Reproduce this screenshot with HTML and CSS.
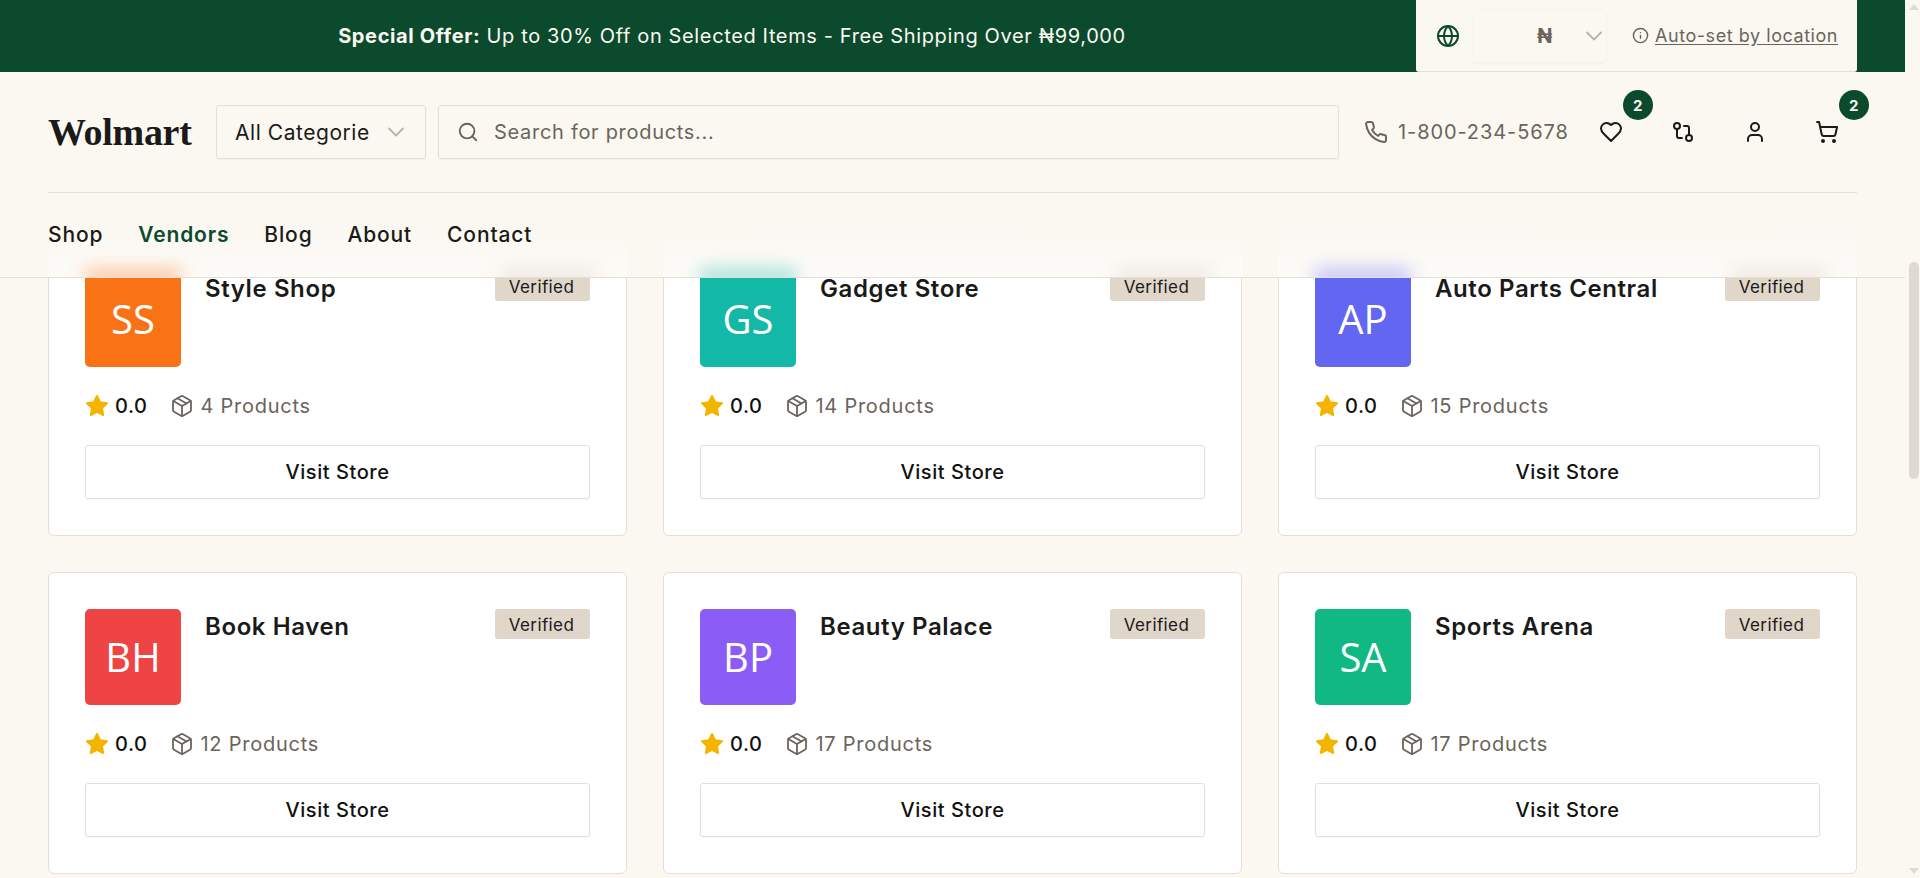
FILE: index.html
```html
<!DOCTYPE html>
<html lang="en">
<head>
<meta charset="utf-8">
<title>Wolmart Vendors</title>
<link rel="stylesheet" href="styles.css">
</head>
<body>
<svg class="sprite" aria-hidden="true">
  <symbol id="i-star" viewBox="0 0 24 24"><polygon points="12 2 15.09 8.26 22 9.27 17 14.14 18.18 21.02 12 17.77 5.82 21.02 7 14.14 2 9.27 8.91 8.26 12 2"/></symbol>
  <symbol id="i-box" viewBox="0 0 24 24"><path d="m7.5 4.27 9 5.15"/><path d="M21 8a2 2 0 0 0-1-1.73l-7-4a2 2 0 0 0-2 0l-7 4A2 2 0 0 0 3 8v8a2 2 0 0 0 1 1.73l7 4a2 2 0 0 0 2 0l7-4A2 2 0 0 0 21 16Z"/><path d="m3.3 7 8.7 5 8.7-5"/><path d="M12 22V12"/></symbol>
  <symbol id="i-chev" viewBox="0 0 24 24"><path d="m5 8.5 7 7 7-7"/></symbol>
</svg>
<div class="window">
  <div class="page">
    <div class="chrome">
      <div class="topbar">
        <p class="offer"><strong>Special Offer:</strong> Up to 30% Off on Selected Items - Free Shipping Over ₦99,000</p>
        <div class="locale">
          <svg class="ico globe" viewBox="0 0 24 24"><circle cx="12" cy="12" r="10"/><path d="M12 2a14.5 14.5 0 0 0 0 20 14.5 14.5 0 0 0 0-20"/><path d="M2 12h20"/></svg>
          <div class="currency"><span class="currency-val">₦</span><svg class="ico chev-sm"><use href="#i-chev"/></svg></div>
          <svg class="ico info" viewBox="0 0 24 24"><circle cx="12" cy="12" r="10"/><path d="M12 16v-4"/><path d="M12 8h.01"/></svg>
          <a class="auto" href="#">Auto-set by location</a>
        </div>
      </div>
      <header class="header">
        <div class="glow" aria-hidden="true">
          <div class="glow-card"><span class="halo orange"></span><span class="halo tan"></span></div>
          <div class="glow-card"><span class="halo teal"></span><span class="halo tan"></span></div>
          <div class="glow-card"><span class="halo indigo"></span><span class="halo tan"></span></div>
        </div>
        <div class="mainrow">
          <div class="logo">Wolmart</div>
          <div class="catselect"><span>All Categorie</span><svg class="ico chev-sm"><use href="#i-chev"/></svg></div>
          <label class="search">
            <svg class="ico search-ico" viewBox="0 0 24 24"><circle cx="11" cy="11" r="8"/><path d="m21 21-4.3-4.3"/></svg>
            <input class="search-input" type="text" placeholder="Search for products...">
          </label>
          <div class="phone">
            <svg class="ico phone-ico" viewBox="0 0 24 24"><path d="M22 16.92v3a2 2 0 0 1-2.18 2 19.79 19.79 0 0 1-8.63-3.07 19.5 19.5 0 0 1-6-6 19.79 19.79 0 0 1-3.07-8.67A2 2 0 0 1 4.11 2h3a2 2 0 0 1 2 1.72 12.84 12.84 0 0 0 .7 2.81 2 2 0 0 1-.45 2.11L8.09 9.91a16 16 0 0 0 6 6l1.27-1.27a2 2 0 0 1 2.11-.45 12.84 12.84 0 0 0 2.81.7A2 2 0 0 1 22 16.92z"/></svg>
            <span>1-800-234-5678</span>
          </div>
          <div class="actions">
            <a class="action" href="#"><svg class="ico" viewBox="0 0 24 24"><path d="M19 14c1.49-1.46 3-3.21 3-5.5A5.5 5.5 0 0 0 16.5 3c-1.76 0-3 .5-4.5 2-1.5-1.5-2.74-2-4.5-2A5.5 5.5 0 0 0 2 8.5c0 2.3 1.5 4.05 3 5.5l7 7Z"/></svg><span class="badge">2</span></a>
            <a class="action" href="#"><svg class="ico" viewBox="0 0 24 24"><circle cx="18" cy="18" r="3"/><circle cx="6" cy="6" r="3"/><path d="M13 6h3a2 2 0 0 1 2 2v7"/><path d="M11 18H8a2 2 0 0 1-2-2V9"/></svg></a>
            <a class="action" href="#"><svg class="ico" viewBox="0 0 24 24"><path d="M19 21v-2a4 4 0 0 0-4-4H9a4 4 0 0 0-4 4v2"/><circle cx="12" cy="7" r="4"/></svg></a>
            <a class="action" href="#"><svg class="ico" viewBox="0 0 24 24"><circle cx="8" cy="21" r="1"/><circle cx="19" cy="21" r="1"/><path d="M2.05 2.05h2l2.66 12.42a2 2 0 0 0 2 1.58h9.78a2 2 0 0 0 1.95-1.57l1.65-7.43H5.12"/></svg><span class="badge">2</span></a>
          </div>
        </div>
        <nav class="nav">
          <a href="#">Shop</a>
          <a class="active" href="#">Vendors</a>
          <a href="#">Blog</a>
          <a href="#">About</a>
          <a href="#">Contact</a>
        </nav>
      </header>
    </div>

    <main class="grid">
      <article class="card">
        <div class="card-top"><div class="avatar orange">SS</div><h3 class="name">Style Shop</h3><span class="verified">Verified</span></div>
        <div class="stats"><svg class="star"><use href="#i-star"/></svg><span class="rate">0.0</span><svg class="ico box"><use href="#i-box"/></svg><span class="count">4 Products</span></div>
        <a class="visit" href="#">Visit Store</a>
      </article>
      <article class="card">
        <div class="card-top"><div class="avatar teal">GS</div><h3 class="name">Gadget Store</h3><span class="verified">Verified</span></div>
        <div class="stats"><svg class="star"><use href="#i-star"/></svg><span class="rate">0.0</span><svg class="ico box"><use href="#i-box"/></svg><span class="count">14 Products</span></div>
        <a class="visit" href="#">Visit Store</a>
      </article>
      <article class="card">
        <div class="card-top"><div class="avatar indigo">AP</div><h3 class="name">Auto Parts Central</h3><span class="verified">Verified</span></div>
        <div class="stats"><svg class="star"><use href="#i-star"/></svg><span class="rate">0.0</span><svg class="ico box"><use href="#i-box"/></svg><span class="count">15 Products</span></div>
        <a class="visit" href="#">Visit Store</a>
      </article>
      <article class="card">
        <div class="card-top"><div class="avatar red">BH</div><h3 class="name">Book Haven</h3><span class="verified">Verified</span></div>
        <div class="stats"><svg class="star"><use href="#i-star"/></svg><span class="rate">0.0</span><svg class="ico box"><use href="#i-box"/></svg><span class="count">12 Products</span></div>
        <a class="visit" href="#">Visit Store</a>
      </article>
      <article class="card">
        <div class="card-top"><div class="avatar violet">BP</div><h3 class="name">Beauty Palace</h3><span class="verified">Verified</span></div>
        <div class="stats"><svg class="star"><use href="#i-star"/></svg><span class="rate">0.0</span><svg class="ico box"><use href="#i-box"/></svg><span class="count">17 Products</span></div>
        <a class="visit" href="#">Visit Store</a>
      </article>
      <article class="card">
        <div class="card-top"><div class="avatar green">SA</div><h3 class="name">Sports Arena</h3><span class="verified">Verified</span></div>
        <div class="stats"><svg class="star"><use href="#i-star"/></svg><span class="rate">0.0</span><svg class="ico box"><use href="#i-box"/></svg><span class="count">17 Products</span></div>
        <a class="visit" href="#">Visit Store</a>
      </article>
    </main>
  </div>
  <div class="scrollbar">
    <span class="arrow up"></span>
    <span class="thumb"></span>
    <span class="arrow down"></span>
  </div>
</div>
</body>
</html>
```

FILE: styles.css
```css
* { box-sizing: border-box; }
html, body { margin: 0; height: 100%; overflow: hidden; }
body {
  background: #fbf8f2;
  color: #1a1a18;
  font-family: "Inter", "Liberation Sans", sans-serif;
  font-size: 20px;
  letter-spacing: .55px;
}
a { color: inherit; text-decoration: none; }
h3, p { margin: 0; }
.sprite { display: none; }
.ico {
  width: 24px; height: 24px; flex: none;
  fill: none; stroke: currentColor; stroke-width: 2;
  stroke-linecap: round; stroke-linejoin: round;
}

.window { display: flex; height: 878px; }
.page { position: relative; width: 1905px; height: 878px; overflow: hidden; }

.chrome { position: absolute; top: 0; left: 0; right: 0; z-index: 5; }

.topbar {
  display: flex; align-items: stretch; height: 72px;
  padding: 0 48px; background: #0b4a2c; color: #fbf8f2;
}
.offer { flex: 1; align-self: center; text-align: center; letter-spacing: .63px; }
.offer strong { font-weight: 700; }
.locale {
  width: 441px; display: flex; align-items: center;
  padding: 0 18px 0 20px; background: #fbf8f2;
  border-bottom: 1px solid #e4dfd6;
  border-radius: 0 0 3px 3px; color: #6b645c;
}
.globe { color: #0b4a2c; }
.currency {
  position: relative; width: 135px; height: 54px; margin: 0 25px 0 12px;
  display: flex; align-items: center; justify-content: space-between;
  padding: 0 0 0 64px; border-radius: 4px;
  border: 1px solid #f8f4ed;
  box-shadow: 0 1px 2px rgba(0,0,0,.03);
  font-weight: 700; color: #6b645c;
}
.currency-val { font-size: 20px; }
.chev-sm { color: #b8b3aa; stroke-width: 1.8; }
.info { width: 17px; height: 17px; margin-right: 6px; stroke-width: 2; }
.auto { font-size: 18px; letter-spacing: .55px; white-space: nowrap; text-decoration: underline; text-underline-offset: 2px; }

.header {
  position: relative; isolation: isolate; overflow: hidden;
  height: 206px; padding: 33px 48px 0;
  background: #fbf8f2;
  border-bottom: 1px solid #e4dfd6;
}
.glow {
  position: absolute; z-index: -1; left: 0; right: 0; bottom: 0; height: 46px;
  display: grid; grid-template-columns: repeat(3, 1fr); gap: 36px; padding: 0 48px;
}
.glow-card {
  display: flex; justify-content: space-between; align-items: flex-end;
  padding: 0 30px 0 37px; overflow: hidden;
  background: linear-gradient(rgba(255,255,255,0), rgba(255,255,255,.45));
}
.halo { width: 96px; height: 16px; margin-bottom: -8px; opacity: .42; filter: blur(9px); flex: none; }
.halo.tan { background: #c9b8a4; width: 95px; opacity: .3; }

.mainrow {
  display: flex; align-items: center; height: 54px;
}
.logo {
  width: 168px; flex: none;
  font-family: "Liberation Serif", serif; font-weight: 700; font-size: 38px;
  letter-spacing: -.3px; color: #1a1a18;
}
.catselect {
  width: 210px; height: 54px; flex: none; margin-right: 12px;
  display: flex; align-items: center; justify-content: space-between;
  padding: 0 17px 0 18px;
  border: 1px solid #e4dfd6; border-radius: 3px;
  box-shadow: 0 1px 2px rgba(0,0,0,.04);
  white-space: nowrap; font-size: 21px;
}
.search {
  width: 901px; height: 54px; flex: none; display: flex; align-items: center; gap: 13px;
  padding: 0 18px;
  border: 1px solid #e4dfd6; border-radius: 3px;
  box-shadow: 0 1px 2px rgba(0,0,0,.04);
  color: #6b645c;
}
.search-ico { width: 22px; height: 22px; }
.search-input {
  flex: 1; border: 0; outline: 0; background: none;
  font: inherit; letter-spacing: .7px; color: #6b645c;
}
.search-input::placeholder { color: #6b645c; opacity: 1; }
.phone {
  display: flex; align-items: center; gap: 10px; margin-left: 25px; color: #6b645c; white-space: nowrap; letter-spacing: .9px;
}
.actions { display: flex; gap: 24px; margin-left: 18px; }
.action {
  position: relative; width: 48px; height: 48px;
  display: flex; align-items: center; justify-content: center;
}
.badge {
  position: absolute; top: -18px; right: -18px;
  width: 30px; height: 30px; border-radius: 50%;
  display: flex; align-items: center; justify-content: center;
  background: #0b4a2c; color: #fbf8f2; font-size: 15px; letter-spacing: 0; font-weight: 700;
}

.nav {
  display: flex; gap: 35px; height: 84px; align-items: center;
  margin-top: 33px; border-top: 1px solid #e4dfd6;
  font-size: 21px; letter-spacing: .85px; font-weight: 500;
}
.nav .active { color: #0b4a2c; font-weight: 600; }

.grid {
  display: grid; grid-template-columns: repeat(3, 1fr); gap: 36px;
  padding: 234px 48px 0;
}
.card {
  height: 302px; padding: 36px;
  background: #fff; border: 1px solid #e4dfd6; border-radius: 6px;
  display: flex; flex-direction: column;
}
.card-top { display: flex; align-items: flex-start; height: 96px; }
.avatar {
  width: 96px; height: 96px; flex: none; border-radius: 5px;
  display: flex; align-items: center; justify-content: center;
  padding-bottom: 2px;
  font-family: "Open Sans", sans-serif; font-size: 40px; letter-spacing: 0; color: #fff;
}
.orange { background: #f97316; }
.teal { background: #14b8a6; }
.indigo { background: #6366f1; }
.red { background: #ef4444; }
.violet { background: #8b5cf6; }
.green { background: #10b981; }
.name { flex: 1; margin-left: 24px; padding-top: 1px; font-size: 24px; line-height: 34px; font-weight: 600; letter-spacing: .6px; }
.verified {
  width: 95px; height: 30px; flex: none; border-radius: 3px;
  display: flex; align-items: center; justify-content: center;
  padding: 1px 2px 0 0;
  background: #e0d6ca; font-size: 17px; letter-spacing: .4px; color: #1a1a18;
}
.stats { display: flex; align-items: center; height: 30px; margin-top: 24px; }
.star { width: 24px; height: 24px; fill: #f4b400; stroke: #f4b400; stroke-width: 2; stroke-linejoin: round; }
.rate { margin-left: 6px; font-weight: 500; color: #111; }
.box { width: 24px; height: 24px; margin-left: 23px; color: #6b645c; stroke-width: 1.8; }
.count { margin-left: 6px; color: #6b645c; letter-spacing: .75px; }
.visit {
  height: 54px; margin-top: 24px;
  display: flex; align-items: center; justify-content: center;
  border: 1px solid #e4dfd6; border-radius: 3px;
  box-shadow: 0 1px 2px rgba(0,0,0,.04);
  font-weight: 500; color: #111;
}

.scrollbar {
  width: 15px; height: 878px; flex: none;
  display: flex; flex-direction: column; align-items: center;
  padding-top: 4px; padding-bottom: 4px;
}
.thumb { width: 10px; height: 217px; margin-top: 252px; margin-left: 3px; border-radius: 5px; background: #dedad3; }
.arrow { width: 0; height: 0; border-left: 5px solid transparent; border-right: 5px solid transparent; margin-left: 3px; }
.arrow.up { border-bottom: 6px solid #dedad3; }
.arrow.down { margin-top: auto; border-top: 6px solid #dedad3; }
```
